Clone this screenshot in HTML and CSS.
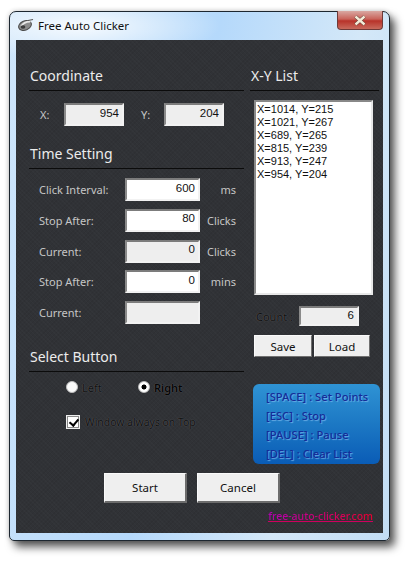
FILE: index.html
```html
<!DOCTYPE html>
<html lang="en">
<head>
<meta charset="utf-8">
<title>Free Auto Clicker</title>
<link rel="stylesheet" href="styles.css">
</head>
<body>
<div class="window">
  <div class="titlebar">
    <svg class="app-icon" width="16" height="14" viewBox="0 0 16 14">
      <ellipse cx="7" cy="7.5" rx="6.6" ry="4.6" transform="rotate(-22 7 7.5)" fill="#8c8c8c" stroke="#4a4a4a"/>
      <path d="M3 8.5C5 5 9 3.5 12.5 3.6" stroke="#e8e8e8" stroke-width="1.6" fill="none"/>
      <path d="M10 2.5l5-1" stroke="#555" stroke-width="1.2"/>
      <ellipse cx="5" cy="9" rx="2.4" ry="1.8" fill="#3c3c3c"/>
    </svg>
    <span class="title">Free Auto Clicker</span>
    <div class="close">
      <svg width="14" height="11" viewBox="0 0 14 11"><path d="M2.5 1.5l9 8M11.5 1.5l-9 8" stroke="#5b3a34" stroke-width="3.6"/><path d="M2.5 1.5l9 8M11.5 1.5l-9 8" stroke="#f4ecd8" stroke-width="2.4"/></svg>
    </div>
  </div>
  <div class="client">
    <div class="columns">
      <div class="left">
        <h2 class="head">Coordinate</h2>
        <div class="coord">
          <span class="lab coord-x">X:</span>
          <input class="field off coord-field" value="954" readonly>
          <span class="lab coord-y">Y:</span>
          <input class="field off coord-field" value="204" readonly>
        </div>
        <h2 class="head head-time">Time Setting</h2>
        <div class="time">
          <span class="lab">Click Interval:</span><input class="field" value="600" readonly><span class="lab unit">ms</span>
          <span class="lab">Stop After:</span><input class="field" value="80" readonly><span class="lab unit">Clicks</span>
          <span class="lab">Current:</span><input class="field off" value="0" readonly><span class="lab unit">Clicks</span>
          <span class="lab">Stop After:</span><input class="field" value="0" readonly><span class="lab unit">mins</span>
          <span class="lab">Current:</span><input class="field off" value="" readonly><span></span>
        </div>
        <h2 class="head head-select">Select Button</h2>
        <div class="radios">
          <label class="choice choice-left"><input type="radio" name="b" class="radio"><span>Left</span></label>
          <label class="choice"><input type="radio" name="b" class="radio" checked><span class="strong">Right</span></label>
        </div>
        <label class="choice top-check"><input type="checkbox" class="check" checked><span>Window always on Top</span></label>
      </div>
      <div class="right">
        <h2 class="head">X-Y List</h2>
        <div class="list">
          <div>X=1014, Y=215</div>
          <div>X=1021, Y=267</div>
          <div>X=689, Y=265</div>
          <div>X=815, Y=239</div>
          <div>X=913, Y=247</div>
          <div>X=954, Y=204</div>
        </div>
        <div class="count">
          <span class="count-lab">Count :</span>
          <input class="field off count-field" value="6" readonly>
        </div>
        <div class="list-btns">
          <button class="btn save">Save</button>
          <button class="btn load">Load</button>
        </div>
        <div class="help">
          <div>[SPACE] : Set Points</div>
          <div>[ESC] : Stop</div>
          <div>[PAUSE] : Pause</div>
          <div>[DEL] : Clear List</div>
        </div>
      </div>
    </div>
    <div class="actions">
      <button class="btn big">Start</button>
      <button class="btn big">Cancel</button>
    </div>
    <div class="foot"><a class="site" href="#">free-auto-clicker.com</a></div>
  </div>
</div>
</body>
</html>
```
FILE: styles.css
```css
* { box-sizing: border-box; }
html, body { margin: 0; padding: 0; height: 100%; background: #fff; overflow: hidden; }
body { padding: 11px 0 0 9px; font-family: "Noto Sans", sans-serif; }

.window {
  width: 381px;
  height: 530px;
  padding: 0 6px 7px;
  display: flex;
  flex-direction: column;
  border: 1px solid #1d2730;
  border-radius: 7px 7px 5px 5px;
  background:
    radial-gradient(ellipse 140px 34px at 70px 14px, rgba(255,255,255,.85), rgba(255,255,255,0) 100%),
    linear-gradient(100deg, #cfe6fb 0%, #b5d9fb 45%, #d4e8f8 75%, #c2ddf5 100%);
  box-shadow: 5px 6px 9px rgba(0,0,0,.65), 0 0 5px rgba(0,0,0,.2);
}
.titlebar { height: 28px; flex: none; display: flex; align-items: center; position: relative; padding: 0 0 2px 2px; }
.app-icon { flex: none; margin-right: 4px; }
.title { font-size: 11.5px; color: #111; }
.close {
  position: absolute; right: 0; top: -1px;
  width: 46px; height: 19px;
  display: flex; align-items: center; justify-content: center;
  border: 1px solid #6e3a38; border-top: 0;
  border-radius: 0 0 4px 4px;
  background: linear-gradient(#d9a8a2 0%, #c9635a 45%, #b8332a 55%, #c86a5c 100%);
}

.client {
  flex: 1;
  padding: 24px 5px 0 13px;
  background-color: #303236;
  background-image:
    repeating-linear-gradient(45deg, rgba(255,255,255,.015) 0 1px, transparent 1px 3px),
    repeating-linear-gradient(-45deg, rgba(0,0,0,.05) 0 1px, transparent 1px 3px);
}
.columns { display: grid; grid-template-columns: 215px 129px; column-gap: 6px; height: 400px; }
.left, .right { display: flex; flex-direction: column; align-items: flex-start; }

.head {
  align-self: stretch;
  margin: 0; padding-left: 1px;
  height: 27px;
  font-size: 14px; font-weight: 400; line-height: 23px;
  color: #ececec;
  border-bottom: 1px solid #0b0b0b;
}
.head-time { margin-top: 16px; }
.head-select { margin-top: 21px; }

.lab { font-size: 11px; color: #c6c6c6; }
.field {
  width: 75px; height: 23px;
  padding: 0 3px 4px 0;
  text-align: right;
  font-family: "Liberation Sans", sans-serif;
  font-size: 11.5px; color: #111;
  background: #fff;
  border: 2px solid; border-color: #7c7c7c #f2f2f2 #f2f2f2 #8a8a8a;
  border-radius: 0; outline: none;
}
.off { background: #eeeeee; }

.coord { display: flex; align-items: center; margin-top: 12px; padding-left: 11px; }
.coord-x { width: 24px; }
.coord-y { width: 23px; margin-left: 17px; }
.coord-field { width: 60px; }

.time {
  display: grid;
  grid-template-columns: 86px 75px 36px;
  grid-auto-rows: 23px;
  row-gap: 7.75px;
  align-items: center;
  margin-top: 9px; padding-left: 10px;
}
.unit { text-align: right; }

.radios { display: flex; margin-top: 8px; padding-left: 37px; }
.choice { display: flex; align-items: center; gap: 4px; height: 14px; font-size: 11px; color: #101010; text-shadow: 0 0 1px rgba(255,255,255,.3); }
.choice-left { width: 72px; }
.strong { font-weight: 600; color: #050505; }
.radio {
  appearance: none; width: 12px; height: 12px; margin: 0; flex: none;
  border-radius: 50%; background: #fafafa; border: 1px solid #bdbdbd;
}
.radio:checked { background: radial-gradient(circle, #000 0 2.2px, #fff 2.8px); }
.top-check { margin: 21px 0 0 38px; gap: 6px; font-size: 10.4px; }
.check {
  appearance: none; width: 12px; height: 12px; margin: 0; flex: none;
  background: #fff; border: 1px solid #888; position: relative;
}
.check:checked {
  background: #fff;
  box-shadow: 0 0 0 1px #eee;
}
.check:checked::after {
  content: ""; position: absolute; left: 3px; top: 0;
  width: 4px; height: 7px;
  border: solid #000; border-width: 0 2px 2px 0;
  transform: rotate(40deg);
}

.list {
  width: 119px; height: 195px;
  margin: 9px 0 0 4px; padding: 1px 0 0 1px;
  background: #fff;
  border: 2px solid; border-color: #888 #e8e8e8 #e8e8e8 #8a8a8a;
  font-family: "Liberation Sans", sans-serif;
  font-size: 11px; line-height: 13px; color: #111;
}
.count { display: flex; align-items: center; margin: 11px 0 0 6px; }
.count-lab { width: 43px; font-size: 11px; color: #101010; text-shadow: 0 0 1px rgba(255,255,255,.3); }
.count-field { width: 60px; height: 20px; padding-bottom: 2px; }
.list-btns { display: flex; gap: 2px; margin: 9px 0 0 4px; }

.btn {
  height: 22px; padding: 0;
  font-family: "Noto Sans", sans-serif; font-size: 11.5px; color: #111;
  background: #efefef;
  border: 1px solid; border-color: #fafafa #707070 #707070 #fafafa;
  border-radius: 0;
}
.save { width: 58px; }
.load { width: 56px; }

.help {
  width: 127px; height: 80px;
  margin: 27px 0 0 3px; padding: 5px 0 3px 13px;
  display: flex; flex-direction: column; justify-content: space-between;
  border-radius: 6px;
  background: linear-gradient(#2f93d4 0%, #1c78c4 50%, #0a5cb6 100%);
  font-size: 11.2px; font-weight: 500; color: #152c98;
  text-shadow: 1px 1px 1px rgba(130,190,240,.75);
}

.actions { display: flex; gap: 10px; margin-top: 9px; padding-left: 75px; }
.big { width: 83px; height: 30px; border-color: #fafafa #6c6c6c #6c6c6c #fafafa; border-width: 1px 2px 2px 1px; }
.foot { display: flex; justify-content: flex-end; margin-top: 5px; padding-right: 5px; }
.site {
  font-size: 10.5px; line-height: 16px; font-weight: 500;
  color: transparent;
  background: linear-gradient(90deg, #b400b4, #e80030);
  -webkit-background-clip: text; background-clip: text;
  text-decoration: underline; text-decoration-color: #d0005e;
}
```
